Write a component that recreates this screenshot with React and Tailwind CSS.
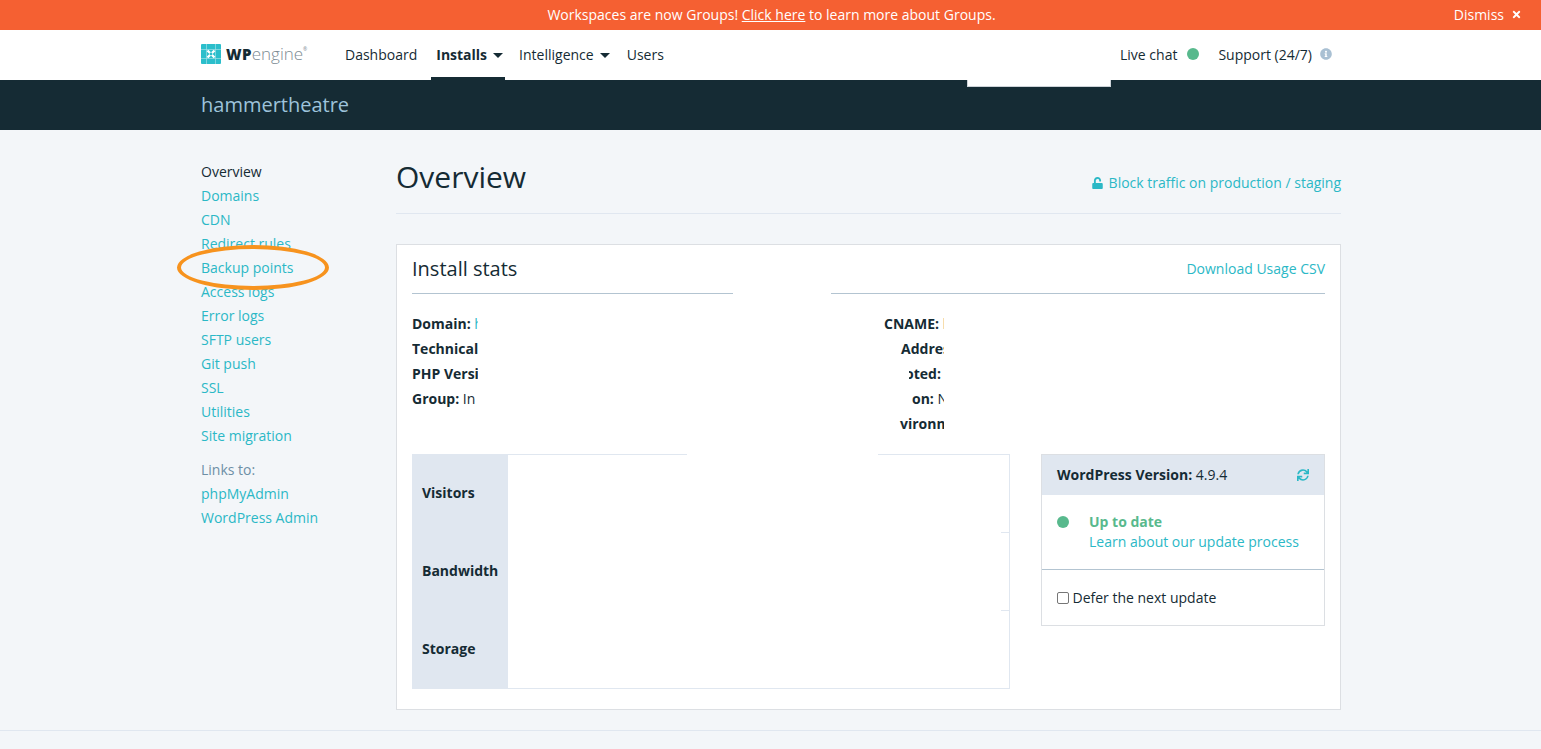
import { Fragment } from 'react';
import { FaTimes, FaInfoCircle, FaSync, FaUnlock } from 'react-icons/fa';

const sideLinks = ['Domains', 'CDN', 'Redirect rules', 'Backup points', 'Access logs', 'Error logs', 'SFTP users', 'Git push', 'SSL', 'Utilities', 'Site migration'];

function Caret() {
  return <span className="inline-block ml-[6px] mb-[2px] w-0 h-0 border-x-[5px] border-x-transparent border-t-[5px] border-t-[#152b34]" />;
}

function Logo() {
  return (
    <div className="flex items-center">
      <svg width="20" height="20" viewBox="0 0 20 20" className="mr-[5px]">
        <rect width="20" height="20" rx="1" fill="#2bbecb" />
        <path d="M0 5.5H20M0 14.5H20M5.5 0V20M14.5 0V20" stroke="#9fe0e6" strokeWidth="0.7" />
        <path d="M6.5 6.5L13.5 13.5M13.5 6.5L6.5 13.5" stroke="#fff" strokeWidth="2.4" />
        <circle cx="10" cy="10" r="1.4" fill="#2bbecb" />
      </svg>
      <span className="text-[15px] font-extrabold tracking-[0.3px] text-[#152b34]">WP</span>
      <span className="text-[17px] font-light text-[#7b8a93] leading-none mb-[1px]">engine</span>
      <span className="text-[5px] text-[#7b8a93] mb-2">®</span>
    </div>
  );
}

function TopNav() {
  return (
    <div className="bg-white h-[50px] pl-[201px] pr-[209px] pb-[2px] flex items-center justify-between text-[14px] text-[#152b34] relative">
      <div className="flex items-center">
        <div className="w-[144px]"><Logo /></div>
        <a>Dashboard</a>
        <a className="relative ml-[19px] font-bold">
          Installs<Caret />
          <span className="absolute -left-[5px] -right-[2px] -bottom-[16px] h-[4px] bg-[#152b34]" />
        </a>
        <a className="ml-[16px]">Intelligence<Caret /></a>
        <a className="ml-[17px]">Users</a>
      </div>
      <div className="flex items-center">
        <a>Live chat</a>
        <span className="ml-[10px] w-[12px] h-[12px] rounded-full bg-[#58b98d]" />
        <a className="ml-[19px]">Support (24/7)</a>
        <FaInfoCircle className="ml-[8px] w-[12px] h-[12px] text-[#a9c0d3]" />
      </div>
      {/* redacted patch hanging over the dark bar */}
      <div className="absolute left-[967px] top-[50px] w-[144px] h-[7px] bg-white border-b border-x border-[#cdd3d8] z-10" />
    </div>
  );
}

function Sidebar() {
  return (
    <aside className="w-[195px] shrink-0 text-[14px] leading-[24px] relative">
      <div className="text-[#152b34]">Overview</div>
      {sideLinks.map((l) => (
        <div key={l} className="text-[#2bb8c6]">{l}</div>
      ))}
      <div className="mt-[10px] text-[#6d8fa6]">Links to:</div>
      <div className="text-[#2bb8c6]">phpMyAdmin</div>
      <div className="text-[#2bb8c6]">WordPress Admin</div>
      {/* annotation ring around Backup points */}
      <div className="absolute left-[-24px] top-[85px] w-[152px] h-[45px] rounded-[50%] border-[4px] border-[#f7931e]" />
    </aside>
  );
}

function InstallInfo() {
  return (
    <div className="flex mt-[17px] text-[14px] leading-[25px] text-[#152b34] h-[125px] whitespace-nowrap">
      <div className="w-[66px] overflow-hidden font-bold">
        <div>Domain: <span className="font-normal text-[#2bb8c6]">h</span></div>
        <div>Technical contact</div>
        <div>PHP Version</div>
        <div>Group: <span className="font-normal">In</span></div>
      </div>
      <div className="ml-[406px] w-[60px] overflow-hidden font-bold">
        <div>CNAME: <span className="font-normal">h</span></div>
        <div className="pl-[17px]">Address</div>
        <div className="ml-[25px] overflow-hidden"><div className="-ml-[4px]">oted:</div></div>
        <div className="pl-[28px]">on: <span className="font-normal">N</span></div>
        <div className="pl-[16px]">vironment</div>
      </div>
    </div>
  );
}

function StatsTable() {
  return (
    <div className="relative w-[598px] border border-l-0 border-[#e0e7f0] bg-white">
      <div className="grid grid-cols-[96px_1fr] grid-rows-[78px_78px_77px] text-[14px] font-bold text-[#152b34]">
        {['Visitors', 'Bandwidth', 'Storage'].map((label, i) => (
          <Fragment key={label}>
            <div className="bg-[#e0e7f0] pl-[10px] pb-[3px] flex items-center">{label}</div>
            <div className="relative">
              {i < 2 && <div className="absolute right-0 bottom-0 w-[8px] h-px bg-[#e0e7f0]" />}
            </div>
          </Fragment>
        ))}
      </div>
      <div className="absolute left-[275px] -top-px w-[191px] h-px bg-white" />
    </div>
  );
}

function WpVersion() {
  return (
    <div className="w-[284px] h-[172px] bg-white border border-[#dcdfe3] text-[14px] text-[#152b34]">
      <div className="h-[40px] bg-[#e0e7f0] pl-[15px] pr-[15px] pb-[2px] flex items-center justify-between">
        <div><span className="font-bold">WordPress Version:</span> 4.9.4</div>
        <FaSync className="w-[12px] h-[12px] mt-[2px] text-[#2bb8c6]" />
      </div>
      <div className="h-[75px] border-b border-[#b3c4d1] flex pl-[15px] pt-[17px] leading-[20px]">
        <span className="mt-[4px] w-[12px] h-[12px] rounded-full bg-[#58b98d]" />
        <div className="ml-[20px]">
          <div className="font-bold text-[#58b98d]">Up to date</div>
          <div className="text-[#2bb8c6]">Learn about our update process</div>
        </div>
      </div>
      <label className="flex items-center pl-[15px] h-[55px]">
        <span className="w-[12px] h-[12px] rounded-[2px] border border-[#767676] bg-white mr-[3.5px]" />
        Defer the next update
      </label>
    </div>
  );
}

export default function App() {
  return (
    <div className="min-h-[749px] bg-[#f3f6f9] font-['Open_Sans',sans-serif] overflow-hidden">
      <div className="h-[30px] pb-[1px] pl-[2px] bg-[#f56032] text-white text-[14px] font-medium flex items-center justify-center relative">
        <span>Workspaces are now Groups! <a className="underline">Click here</a> to learn more about Groups.</span>
        <div className="absolute right-[19px] top-0 h-full pb-[1px] flex items-center">
          Dismiss
          <FaTimes className="ml-[7px] w-[11px] h-[11px]" />
        </div>
      </div>
      <TopNav />
      <div className="h-[50px] bg-[#152b34] px-[201px] flex items-center text-[20px] font-normal text-[#9dc3db]">hammertheatre</div>

      <div className="pl-[201px] pr-[200px] pt-[30px] flex border-b border-[#e0e7f0] h-[601px]">
        <Sidebar />
        <main className="flex-1">
          <div className="h-[54px] border-b border-[#e0e7f0] flex items-start justify-between">
            <h1 className="text-[30px] leading-[34px] text-[#152b34]">Overview</h1>
            <a className="mt-[11px] text-[14px] leading-[24px] text-[#2bb8c6] flex items-center">
              <FaUnlock className="w-[11px] h-[12px] mr-[6px]" />
              Block traffic on production / staging
            </a>
          </div>

          <section className="mt-[30px] h-[466px] bg-white border border-[#dcdfe3] px-[15px]">
            <div className="h-[49px] border-b border-[#b3c4d1] flex items-center justify-between relative">
              <h2 className="text-[20px] text-[#152b34]">Install stats</h2>
              <a className="text-[14px] pb-[2px] text-[#2bb8c6]">Download Usage CSV</a>
              <div className="absolute left-[321px] -bottom-px w-[98px] h-px bg-white" />
            </div>
            <InstallInfo />
            <div className="mt-[18px] flex justify-between">
              <StatsTable />
              <WpVersion />
            </div>
          </section>
        </main>
      </div>
    </div>
  );
}
